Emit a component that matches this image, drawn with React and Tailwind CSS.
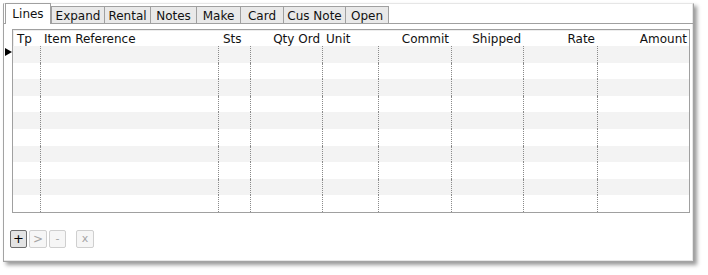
import React from "react";

const tabs = [
  { label: "Lines", w: "w-[46px]" },
  { label: "Expand", w: "w-[53px]" },
  { label: "Rental", w: "w-[46px]" },
  { label: "Notes", w: "w-[46px]" },
  { label: "Make", w: "w-[44px]" },
  { label: "Card", w: "w-[43px]" },
  { label: "Cus Note", w: "w-[62px]" },
  { label: "Open", w: "w-[44px]" },
];

const cols = [
  { label: "Tp", w: "w-[28px]", align: "text-left pl-[4px]" },
  { label: "Item Reference", w: "w-[178px]", align: "text-left pl-[3px]" },
  { label: "Sts", w: "w-[32px]", align: "text-left pl-[4px]" },
  { label: "Qty Ord", w: "w-[72px]", align: "text-right pr-[3px]" },
  { label: "Unit", w: "w-[56px]", align: "text-left pl-[3px]" },
  { label: "Commit", w: "w-[73px]", align: "text-right pr-[3px]" },
  { label: "Shipped", w: "w-[72px]", align: "text-right pr-[3px]" },
  { label: "Rate", w: "w-[74px]", align: "text-right pr-[3px]" },
  { label: "Amount", w: "w-[91px]", align: "text-right pr-[2px]" },
];

const rows = Array.from({ length: 10 }, (_, i) => i);

export default function App() {
  return (
    <div
      className="w-[708px] h-[275px] bg-white pt-[3px] pl-[3px] text-[12px] text-[#111]"
      style={{ fontFamily: '"DejaVu Sans", Verdana, sans-serif' }}
    >
      <div className="relative w-[691px] h-[259px] border border-[#a3a3a3] border-t-[#e6e6e6] shadow-[inset_-1px_-1px_0_#e6e6e6,3px_3px_4px_rgba(0,0,0,0.4)] bg-white flex flex-col">
        {/* tab strip */}
        <div className="flex items-end h-[20px] pl-[1px] border-b border-[#a0a0a0]">
          {tabs.map((t, i) =>
            i === 0 ? (
              <div
                key={t.label}
                className={`${t.w} relative z-10 h-[21px] -mt-[1px] -mb-[1px] self-start bg-white border border-b-0 border-[#a0a0a0] flex items-start justify-center pt-[3px] leading-[14px]`}
              >
                {t.label}
              </div>
            ) : (
              <div
                key={t.label}
                className={`${t.w} h-[17px] bg-[#e9e9e9] border-t border-l border-[#a0a0a0] ${
                  i === tabs.length - 1 ? "border-r" : ""
                } flex items-center justify-center leading-[14px] pt-[1px]`}
              >
                {t.label}
              </div>
            )
          )}
        </div>

        {/* body */}
        <div className="flex flex-col pl-[8px] pt-[5px]">
          <div className="w-[678px] border border-[#a0a0a0] shadow-[inset_1px_1px_0_#ededed] bg-white">
            <div className="flex h-[16px] items-center leading-[14px] pt-[2px]">
              {cols.map((c) => (
                <div key={c.label} className={`${c.w} ${c.align} whitespace-nowrap`}>
                  {c.label}
                </div>
              ))}
            </div>
            {rows.map((r) => (
              <div
                key={r}
                className={`flex h-[16.6px] ${r % 2 === 0 ? "bg-[#f3f3f3]" : "bg-white"}`}
              >
                {cols.map((c, ci) => (
                  <div
                    key={c.label}
                    className={`${c.w} h-full ${
                      ci < cols.length - 1 ? "border-r border-dotted border-[#8a8a8a]" : ""
                    }`}
                  />
                ))}
              </div>
            ))}
          </div>

          {/* buttons */}
          <div className="flex items-center mt-[17px] -ml-[2px] gap-[2px]">
            <button className="w-[17px] h-[18px] rounded-[2px] border border-[#6e6e6e] bg-[#e4e4e4] flex items-center justify-center text-[13px] leading-none text-black">
              +
            </button>
            <button className="w-[18px] h-[18px] rounded-[2px] border border-[#cfcfcf] bg-[#f6f6f6] flex items-center justify-center text-[12px] leading-none text-[#a5a5a5]">
              &gt;
            </button>
            <button className="w-[17px] h-[18px] rounded-[2px] border border-[#cfcfcf] bg-[#f6f6f6] flex items-center justify-center text-[11px] leading-none text-[#a5a5a5]">
              -
            </button>
            <button className="ml-[8px] w-[18px] h-[18px] rounded-[2px] border border-[#cfcfcf] bg-[#f6f6f6] flex items-center justify-center text-[11px] leading-none text-[#a5a5a5]">
              x
            </button>
          </div>
        </div>

        {/* current row indicator */}
        <svg
          className="absolute left-[1px] top-[44px]"
          width="7"
          height="8"
          viewBox="0 0 7 8"
        >
          <polygon points="0,0 7,4 0,8" fill="#000" />
        </svg>
      </div>
    </div>
  );
}
